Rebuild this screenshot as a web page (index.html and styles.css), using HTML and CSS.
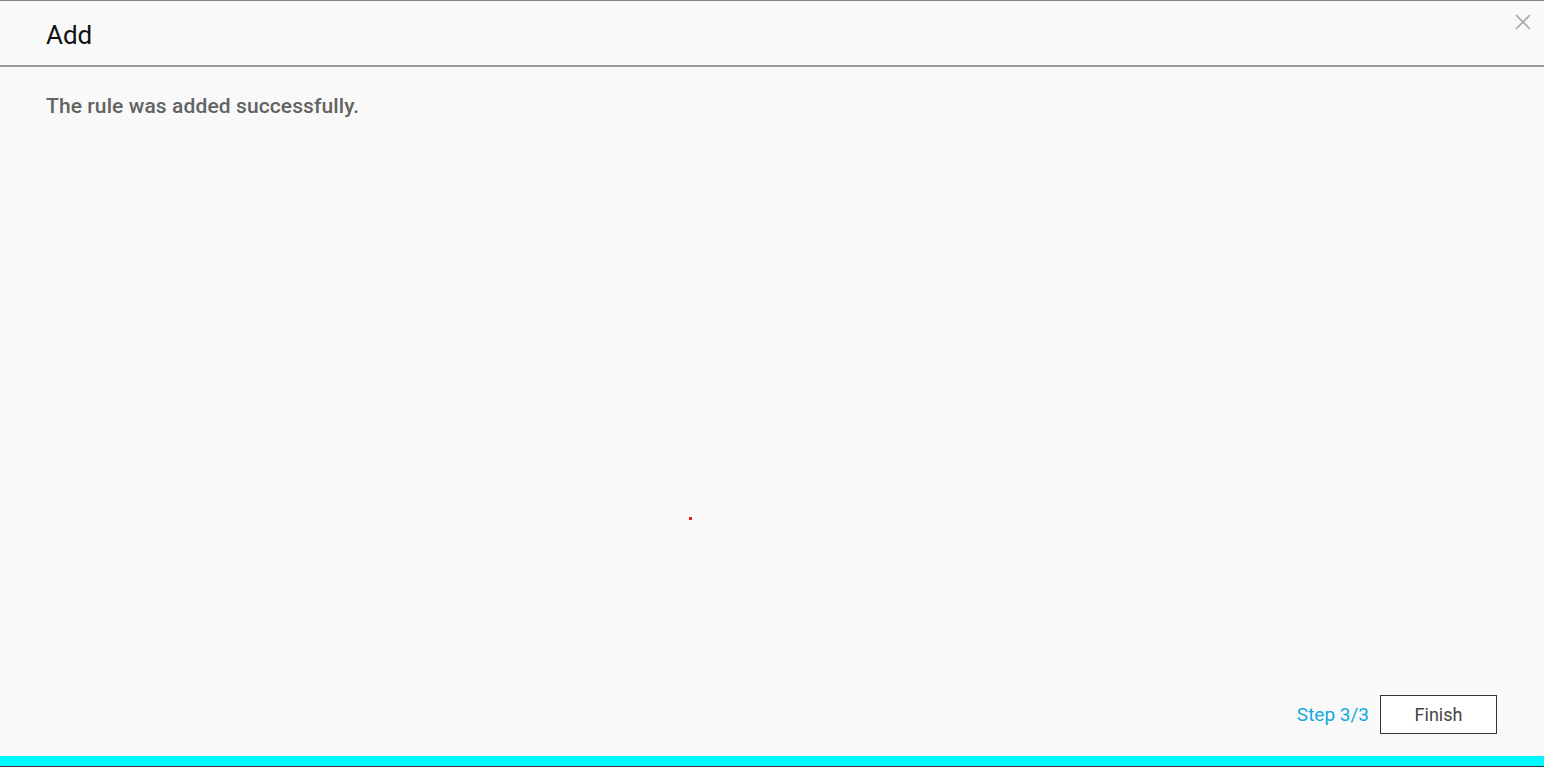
FILE: index.html
```html
<!DOCTYPE html>
<html lang="en">
<head>
    <meta charset="UTF-8">
    <title>Add</title>
    <link rel="stylesheet" href="styles.css">
</head>
<body>

<div class="dialog">
    <div class="dialog-header">
        <h2>Add</h2>
        <button class="close-btn" aria-label="Close">
            <svg width="18" height="18" viewBox="0 0 18 18">
                <path d="M2 2 L16 16 M16 2 L2 16" stroke="#a8a8a8" stroke-width="1.6" fill="none"/>
            </svg>
        </button>
    </div>

    <div class="dialog-body">
        <p>The rule was added successfully.</p>
        <span class="dot"></span>
    </div>

    <div class="dialog-footer">
        <span class="step">Step 3/3</span>
        <button class="finish-btn">Finish</button>
    </div>

    <div class="bottom-bar"></div>
</div>

</body>
</html>
```

FILE: styles.css
```css
html, body {
    margin: 0;
    padding: 0;
    height: 100%;
}

body {
    font-family: Roboto, "Liberation Sans", sans-serif;
    background: #f9f9f9;
    overflow: hidden;
}

.dialog {
    display: flex;
    flex-direction: column;
    height: 767px;
    border-top: 1px solid #8a8080;
    box-sizing: border-box;
}

.dialog-header {
    position: relative;
    height: 60px;
    padding: 4px 0 0 46px;
    border-bottom: 2px solid #9a9a9a;
    display: flex;
    align-items: center;
}

.dialog-header h2 {
    margin: 0;
    font-size: 26px;
    font-weight: 400;
    color: #111;
}

.close-btn {
    position: absolute;
    top: 12px;
    right: 12px;
    border: none;
    background: none;
    padding: 0;
    cursor: pointer;
}

.dialog-body {
    position: relative;
    flex: 1;
    padding: 27px 46px 0;
}

.dialog-body p {
    margin: 0;
    font-size: 21px;
    font-weight: 500;
    letter-spacing: 0.1px;
    color: #636363;
}

.dot {
    position: absolute;
    left: 689px;
    top: 450px;
    width: 3px;
    height: 3px;
    background: #e82020;
}

.dialog-footer {
    display: flex;
    justify-content: flex-end;
    align-items: center;
    gap: 11px;
    padding: 0 47px 22px 0;
}

.step {
    font-size: 19px;
    color: #14a9dd;
}

.finish-btn {
    width: 117px;
    height: 39px;
    background: #fff;
    border: 1px solid #333;
    font-family: inherit;
    font-size: 18px;
    color: #444;
    cursor: pointer;
}

.bottom-bar {
    height: 10px;
    background: #00f8ff;
    border-bottom: 1px solid #333;
}
```
